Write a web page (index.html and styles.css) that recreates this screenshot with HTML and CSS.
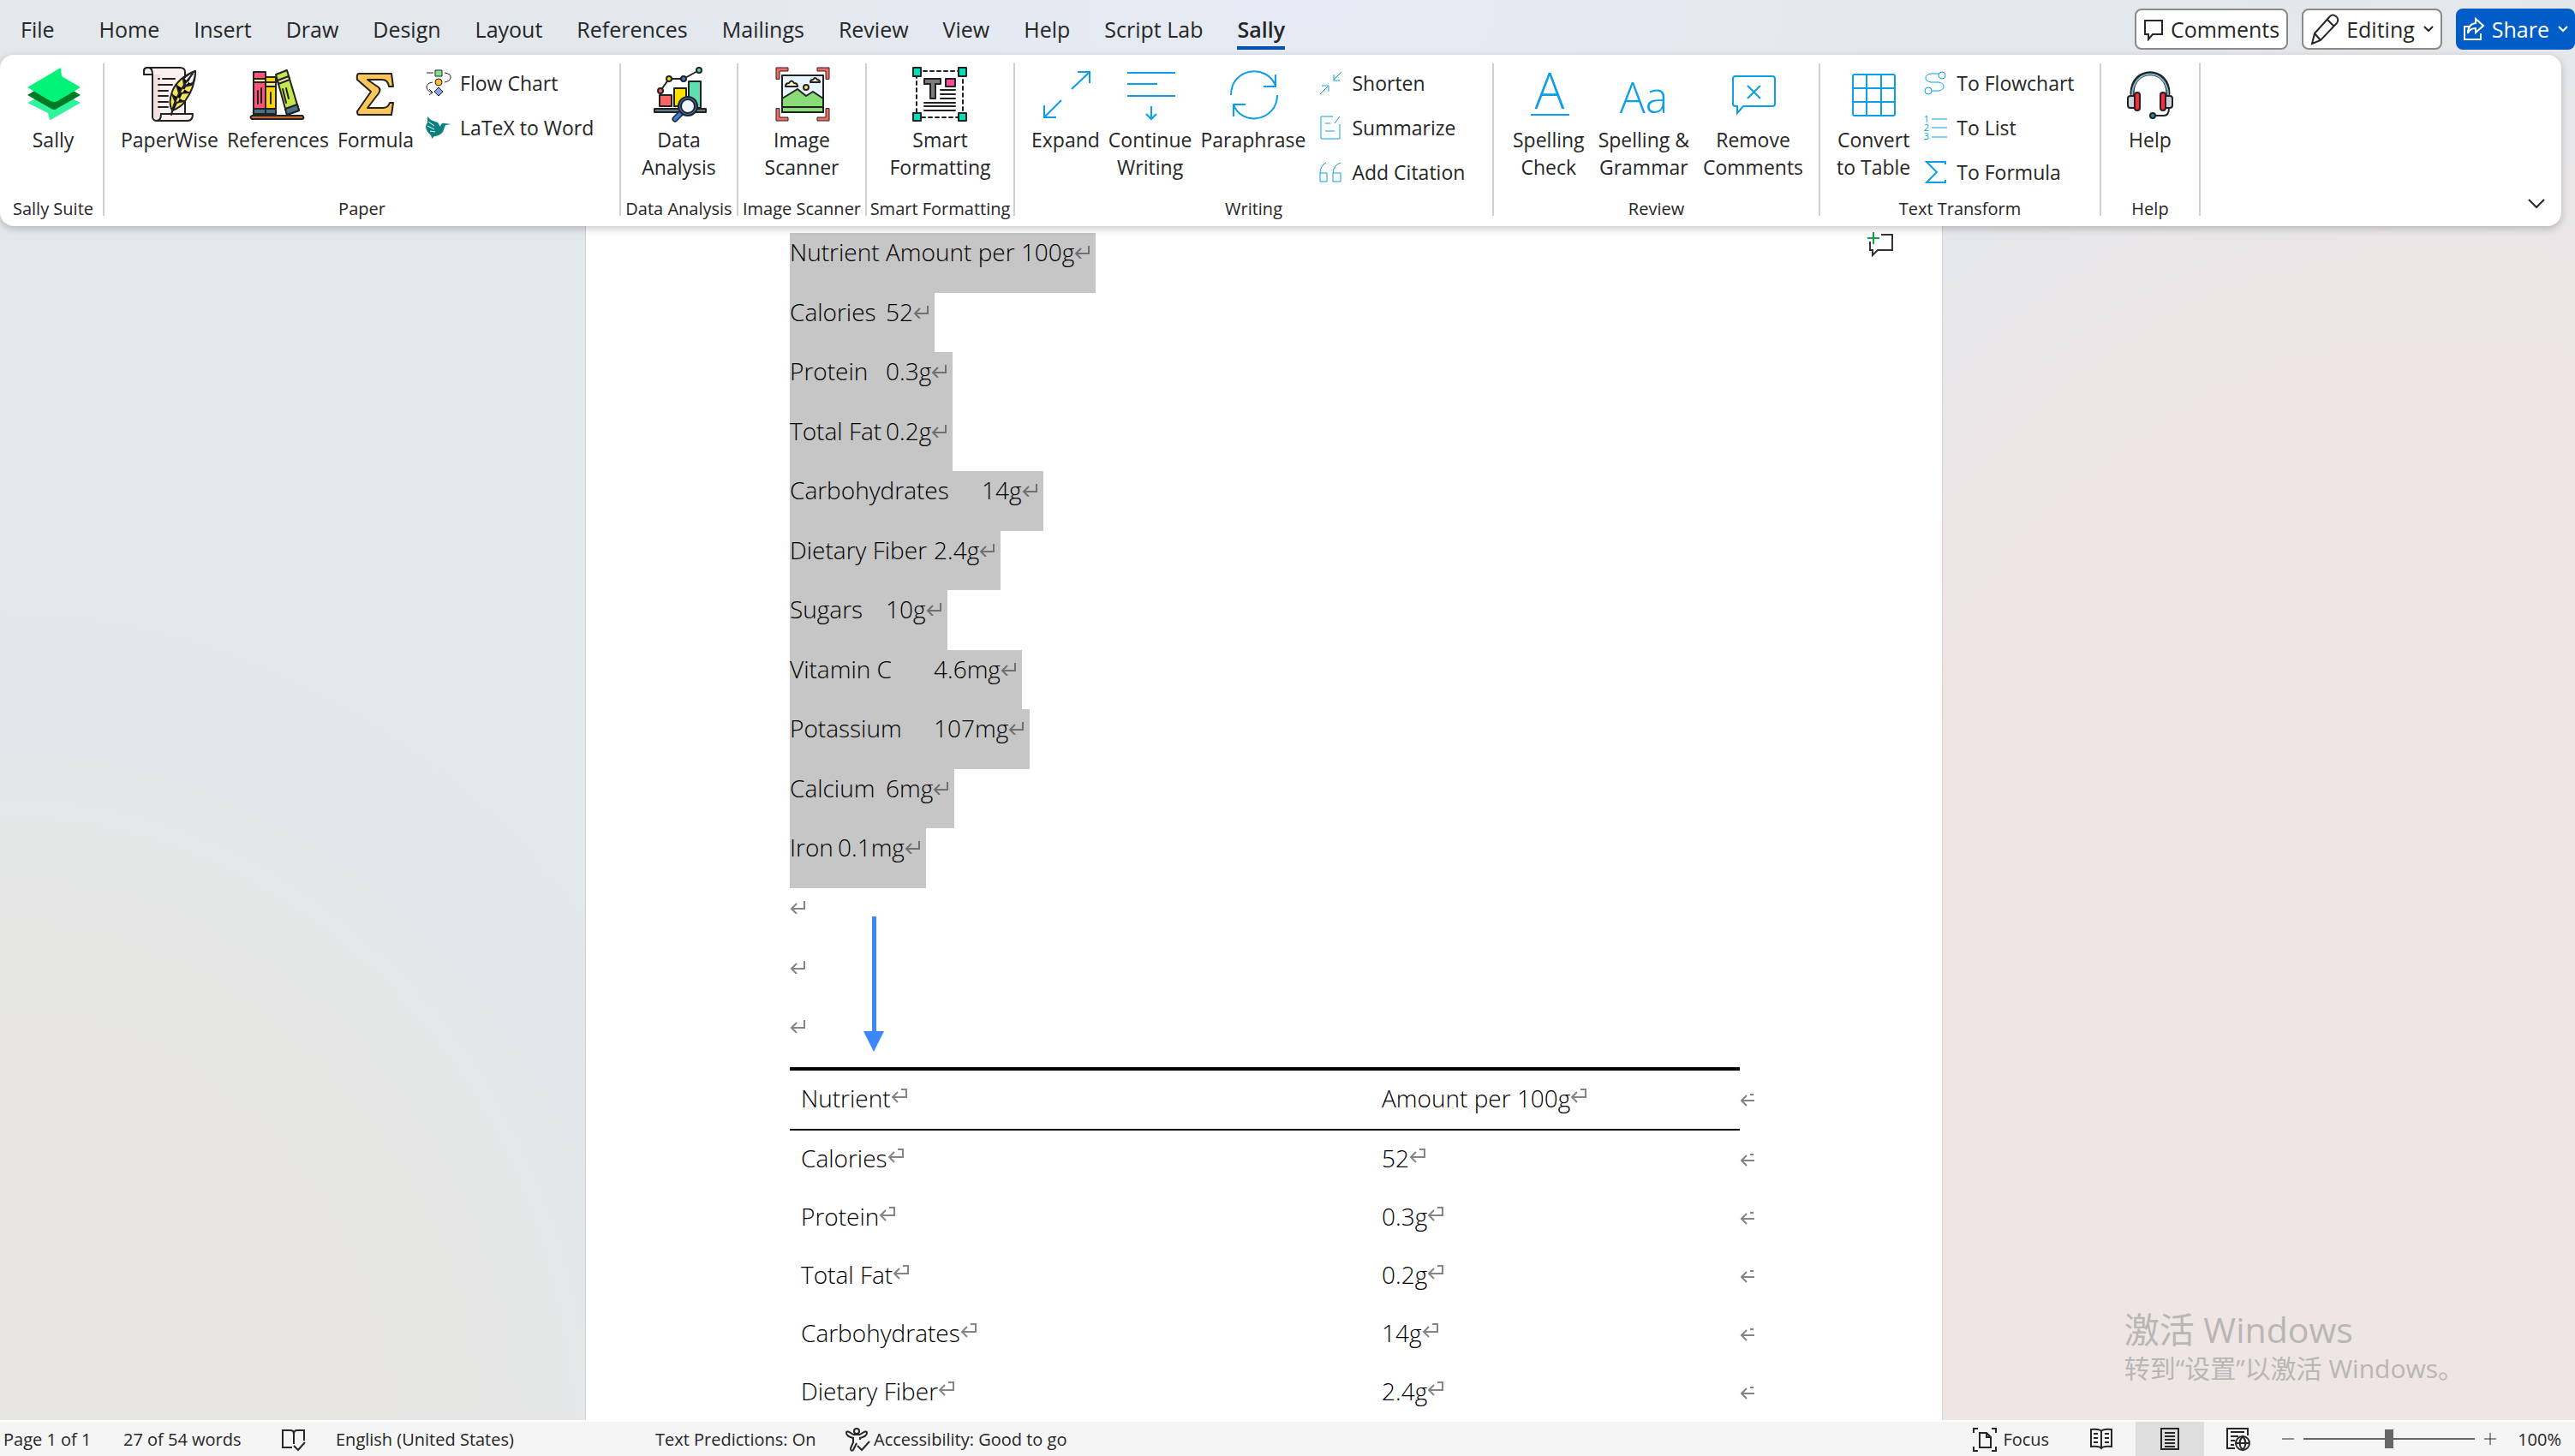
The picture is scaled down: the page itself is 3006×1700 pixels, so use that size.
FILE: index.html
```html
<!DOCTYPE html>
<html lang="en">
<head>
    <meta charset="UTF-8">
    <title>Nutrition - Word</title>
    <link rel="stylesheet" href="styles.css">
</head>
<body>
    <!-- Shared marks -->
    <svg class="defs" aria-hidden="true">
        <symbol id="ret" viewBox="0 0 18 16"><path d="M17 1v9H2M8 4L2 10l6 6"/></symbol>
        <symbol id="cell" viewBox="0 0 20 20"><path d="M12 2h6v9H2M8 5l-6 6 6 6"/></symbol>
        <symbol id="rowend" viewBox="0 0 18 18"><path d="M12 3h4M2 10h15M8 4l-6 6 6 6"/></symbol>
        <symbol id="down" viewBox="0 0 12 12"><path d="M1 3l5 5 5-5"/></symbol>
    </svg>

    <header class="topbar">
        <nav class="tabs">
            <a href="#" class="tab file">File</a>
            <a href="#" class="tab">Home</a>
            <a href="#" class="tab">Insert</a>
            <a href="#" class="tab">Draw</a>
            <a href="#" class="tab">Design</a>
            <a href="#" class="tab">Layout</a>
            <a href="#" class="tab">References</a>
            <a href="#" class="tab">Mailings</a>
            <a href="#" class="tab">Review</a>
            <a href="#" class="tab">View</a>
            <a href="#" class="tab">Help</a>
            <a href="#" class="tab">Script Lab</a>
            <a href="#" class="tab active">Sally</a>
        </nav>
        <div class="actions">
            <button class="action">
                <svg class="line" width="24" height="28" viewBox="0 0 24 28"><path d="M2 4h20v16H11l-5 6v-6H2z"/></svg>
                Comments
            </button>
            <button class="action">
                <svg class="line" width="34" height="38" viewBox="0 0 34 38"><path d="M2 36l3-12L23 4q3-3 7 0t1 8L12 32zM5 24l7 8M20 8l8 8"/></svg>
                Editing
                <svg class="line chev" width="12" height="12"><use href="#down"/></svg>
            </button>
            <button class="action share">
                <svg class="line" width="26" height="28" viewBox="0 0 26 28"><path d="M7 11H2v15h19v-7M15 2l9 8-9 8v-5q-7 0-9 6 0-11 9-12z"/></svg>
                Share
                <svg class="line chev" width="12" height="12"><use href="#down"/></svg>
            </button>
        </div>
    </header>

    <section class="ribbon">
        <div class="group g-sally">
            <div class="tools">
                <button class="tool">
                    <svg class="icon" viewBox="0 0 64 64">
                        <path fill="#2ef59c" d="M2 42l10-5h42l10 5-35 20h-1l-2-8z"/>
                        <path fill="#007a26" d="M2 33l10-6h42l10 6-28 16q-3 2-6 0z"/>
                        <path fill="#00f377" d="M2 24L41 1l1 10 22 13-27 16q-4 2-8 0z"/>
                    </svg>
                    <span>Sally</span>
                </button>
            </div>
            <div class="group-name">Sally Suite</div>
        </div>

        <div class="group g-paper">
            <div class="tools">
                <button class="tool">
                    <svg class="icon ink" viewBox="0 0 64 64">
                        <path fill="#fbf1f0" d="M12 9H2V5q0-4 5-4h37q6 0 6 5v49H22v5q-1 3-5 3t-5-4z"/>
                        <path fill="#f2e0df" stroke="none" d="M13 9h8v51h-8z"/>
                        <path fill="#fbf1f0" d="M7 1q5 0 5 8H2V5q0-4 5-4zM22 55h37q0 8-6 8H17q5 0 5-8z"/>
                        <path d="M19 14h1M24 14h14M19 21h16M19 28h11M19 34h11M19 41h11M19 47h11"/>
                        <path fill="#f5e35c" d="M35 51q-5-9 0-22Q41 13 62 5q0 19-12 35-4 7-15 11z"/>
                        <path fill="#fff" d="M48 14q6-6 14-9 0 8-3 14l-9 3z"/>
                        <path d="M34 56Q38 33 59 8M48 13l1 10 9-2M40 21l3 10 12-1M35 32l4 10 10-2"/>
                    </svg>
                    <span>PaperWise</span>
                </button>
                <button class="tool">
                    <svg class="icon ink" viewBox="0 0 64 64">
                        <path fill="#ff5577" d="M4 6h14v49H4z"/><path fill="#ffd400" d="M18 12h12v43H18z"/>
                        <path fill="#f5ea9c" d="M4 14h14v4H4zM18 18h12v5H18z"/>
                        <path fill="#4a7188" d="M4 49h14v6H4zM18 49h12v6H18z"/>
                        <path fill="#c5e64c" d="M30 9l13-5 14 47-14 5z"/>
                        <path fill="#f0f0a5" d="M32 16l13-5 1 4-13 5z"/><path fill="#4a7188" d="M41 49l14-5 2 7-14 5z"/>
                        <path d="M9 28v15M13 25v17M24 30v13M38 26l4 16M42 25l3 12"/>
                        <path fill="#c96532" d="M2 57h59q3 3 0 4H2q-3-2 0-4z"/>
                    </svg>
                    <span>References</span>
                </button>
                <button class="tool">
                    <svg class="icon ink" viewBox="0 0 64 64">
                        <path fill="#fcc659" d="M12 8h38l2 15h-5q-1-8-8-8H22l13 9q3 3 0 7L22 48h18q6 0 8-6h4l-2 14H12q-2 0-2-4l16-23L10 15q-1-7 2-7z"/>
                    </svg>
                    <span>Formula</span>
                </button>
                <div class="small-tools">
                    <button class="small">
                        <svg class="mini" viewBox="0 0 32 32" fill="none" stroke="#222">
                            <path d="M1 4h8M22 4q8 1 7 6-1 4-7 5M8 15q-7 1-7 6 1 5 7 6M4 23l4 4-4 3"/>
                            <path fill="#7fe09a" d="M11 1h8v7h-8z"/><circle cx="15" cy="15" r="4" fill="#fbc02d"/><path fill="#8f9bf0" d="M15 21l5 5-5 5-5-5z"/>
                        </svg>
                        Flow Chart
                    </button>
                    <button class="small">
                        <svg class="mini" viewBox="0 0 32 32">
                            <path fill="#0a8080" d="M2 3l4 4 8 3 3 5q1-5 5-4l8 1-7 1-3 8q-4 5-10 5l-3 3q0-4-3-6-4-4-4-9l2-4z"/>
                            <path stroke="#fff" d="M3 9l7 5M2 14l8 4M5 20l6 1" fill="none"/>
                        </svg>
                        LaTeX to Word
                    </button>
                </div>
            </div>
            <div class="group-name">Paper</div>
        </div>

        <div class="group g-data">
            <div class="tools">
                <button class="tool">
                    <svg class="icon ink" viewBox="0 0 64 64">
                        <path fill="#ff6464" d="M9 33h14v13H9z"/><path fill="#ffe100" d="M26 25h14v21H26z"/><path fill="#5ce0b0" d="M43 17h14v31H43z"/>
                        <path fill="#5f7d8c" d="M3 49h60v4H3z"/>
                        <path fill="none" d="M10 28l10-14h17L55 4"/>
                        <circle cx="10" cy="28" r="3" fill="#ff6464"/><circle cx="20" cy="14" r="3" fill="#ffe100"/><circle cx="37" cy="14" r="3" fill="#3c7be0"/><circle cx="55" cy="4" r="3" fill="#5ce0b0"/>
                        <path stroke="#222" stroke-width="7" d="M34 54l-7 7"/><path stroke="#3c7be0" stroke-width="4" d="M33 55l-6 6"/>
                        <circle cx="42" cy="46" r="11" fill="#3c7be0"/><circle cx="42" cy="46" r="8" fill="#eef5fb"/>
                    </svg>
                    <span>Data<br>Analysis</span>
                </button>
            </div>
            <div class="group-name">Data Analysis</div>
        </div>

        <div class="group g-image">
            <div class="tools">
                <button class="tool">
                    <svg class="icon ink" viewBox="0 0 64 64">
                        <path fill="#e9f5fe" d="M9 10h48v43H9z"/>
                        <path fill="#89dc78" d="M9 37l18-11 10 8 8-5 12 8v16H9zM9 47h48"/>
                        <circle cx="37" cy="24" r="3" fill="#ffe766"/>
                        <path fill="#fff3c8" d="M13 23q0-4 4-4 3-5 6 0 4 0 4 4zM42 18q0-3 3-3 3-4 5 0 3 0 3 3z"/>
                        <path fill="#f26a60" stroke-width="1" d="M2 14V1h14v4H6v9zM64 14V1H50v4h10v9zM2 49v14h14v-4H6V49zM64 49v14H50v-4h10V49z"/>
                    </svg>
                    <span>Image<br>Scanner</span>
                </button>
            </div>
            <div class="group-name">Image Scanner</div>
        </div>

        <div class="group g-smart">
            <div class="tools">
                <button class="tool">
                    <svg class="icon ink" viewBox="0 0 64 64">
                        <path fill="none" stroke-dasharray="4 4" d="M5 5h54v54H5z"/>
                        <path fill="#00dfb5" d="M1 1h9v10H1zM54 1h9v10h-9zM1 54h9v9H1zM54 54h9v9h-9z"/>
                        <path fill="#7c7c7c" d="M14 14h19v6h-6v17h-6V20h-7z"/>
                        <path fill="#ff4a9a" d="M39 14h11v9H39z"/>
                        <path d="M33 27h17M33 32h17M33 37h17M14 42h36M14 46h36M14 51h36"/>
                    </svg>
                    <span>Smart<br>Formatting</span>
                </button>
            </div>
            <div class="group-name">Smart Formatting</div>
        </div>

        <div class="group g-writing">
            <div class="tools">
                <button class="tool">
                    <svg class="icon cyan" viewBox="0 0 64 64"><path d="M39 26L60 6M46 6h14v13M27 39L7 59M7 45v14h14"/></svg>
                    <span>Expand</span>
                </button>
                <button class="tool">
                    <svg class="icon cyan" viewBox="0 0 64 64"><path d="M5 7h56M5 20h35M5 34h56M33 46v15M27 55l6 6 6-6"/></svg>
                    <span>Continue<br>Writing</span>
                </button>
                <button class="tool">
                    <svg class="icon cyan" viewBox="0 0 64 64"><path d="M6 33C6 1 48-4 58 22M58 9v14H44M60 33c0 31-42 37-51 11M9 58V44h14"/></svg>
                    <span>Paraphrase</span>
                </button>
                <div class="small-tools">
                    <button class="small">
                        <svg class="mini cyan" viewBox="0 0 32 32"><path d="M28 3L19 12M19 6v7h7M3 29l9-9M5 19h8v7"/></svg>
                        Shorten
                    </button>
                    <button class="small">
                        <svg class="mini cyan" viewBox="0 0 32 32"><path d="M18 3H4v26h22V12M9 11h6M9 20h11M20 11l6-8"/></svg>
                        Summarize
                    </button>
                    <button class="small">
                        <svg class="mini cyan" viewBox="0 0 32 32"><path d="M10 5Q3 8 3 18v9h8V17H3M27 5q-9 3-9 13v9h9V17h-9"/></svg>
                        Add Citation
                    </button>
                </div>
            </div>
            <div class="group-name">Writing</div>
        </div>

        <div class="group g-review">
            <div class="tools">
                <button class="tool">
                    <svg class="icon cyan" viewBox="0 0 64 64"><text x="33" y="49" class="big-letter">A</text><path d="M11 56h45"/></svg>
                    <span>Spelling<br>Check</span>
                </button>
                <button class="tool">
                    <svg class="icon cyan" viewBox="0 0 64 64"><text x="32" y="54" class="letters">Aa</text></svg>
                    <span>Spelling &amp;<br>Grammar</span>
                </button>
                <button class="tool">
                    <svg class="icon cyan" viewBox="0 0 64 64"><path d="M11 11h43q3 0 3 3v29q0 3-3 3H20l-7 8v-8h-2q-3 0-3-3V14q0-3 3-3zM25 22l15 15M40 22L25 37"/></svg>
                    <span>Remove<br>Comments</span>
                </button>
            </div>
            <div class="group-name">Review</div>
        </div>

        <div class="group g-transform">
            <div class="tools">
                <button class="tool">
                    <svg class="icon cyan" viewBox="0 0 64 64"><path d="M10 9h45q2 0 2 2v44q0 2-2 2H10q-2 0-2-2V11q0-2 2-2zM8 25h49M8 41h49M24 9v48M41 9v48"/></svg>
                    <span>Convert<br>to Table</span>
                </button>
                <div class="small-tools">
                    <button class="small">
                        <svg class="mini cyan" viewBox="0 0 32 32"><circle cx="23" cy="7" r="4"/><circle cx="7" cy="25" r="4"/><path d="M19 5h-9q-6 1-6 5t6 5h9q6 1 6 5t-6 5h-8"/></svg>
                        To Flowchart
                    </button>
                    <button class="small">
                        <svg class="mini cyan" viewBox="0 0 32 32"><text x="5" y="10" class="digit">1</text><text x="5" y="20" class="digit">2</text><text x="5" y="30" class="digit">3</text><path d="M11 6h18M11 16h18M11 27h18"/></svg>
                        To List
                    </button>
                    <button class="small">
                        <svg class="mini cyan thick" viewBox="0 0 32 32"><path d="M27 7V4H5l12 12L5 28h22v-3"/></svg>
                        To Formula
                    </button>
                </div>
            </div>
            <div class="group-name">Text Transform</div>
        </div>

        <div class="group g-help">
            <div class="tools">
                <button class="tool">
                    <svg class="icon ink" viewBox="0 0 64 64">
                        <path fill="none" stroke-width="5" d="M11 31C11 0 53 0 53 31"/>
                        <path fill="none" stroke="#79b9cb" stroke-width="2" d="M11 34C11 0 53 0 53 34"/>
                        <path fill="#c9d5dd" d="M14 34H9q-3 0-3 3v8q0 3 3 3h5zM50 34h5q3 0 3 3v8q0 3-3 3h-5z"/>
                        <rect x="14" y="30" width="6" height="21" rx="3" fill="#ff2b3c"/><rect x="44" y="30" width="6" height="21" rx="3" fill="#ff2b3c"/>
                        <path fill="none" d="M54 48q0 9-6 9H38"/><circle cx="35" cy="57" r="3" fill="#1b8fc4"/>
                    </svg>
                    <span>Help</span>
                </button>
            </div>
            <div class="group-name">Help</div>
        </div>

        <button class="collapse" aria-label="Collapse ribbon">
            <svg class="line" width="22" height="22" viewBox="0 0 22 22"><path d="M2 6l9 9 9-9"/></svg>
        </button>
    </section>

    <main class="canvas">
        <article class="page">
            <div class="selected">
                <p><span>Nutrient&#9;Amount per 100g<svg class="mark"><use href="#ret"/></svg></span></p>
                <p><span>Calories&#9;52<svg class="mark"><use href="#ret"/></svg></span></p>
                <p><span>Protein&#9;0.3g<svg class="mark"><use href="#ret"/></svg></span></p>
                <p><span>Total Fat&#9;0.2g<svg class="mark"><use href="#ret"/></svg></span></p>
                <p><span>Carbohydrates&#9;14g<svg class="mark"><use href="#ret"/></svg></span></p>
                <p><span>Dietary Fiber&#9;2.4g<svg class="mark"><use href="#ret"/></svg></span></p>
                <p><span>Sugars&#9;10g<svg class="mark"><use href="#ret"/></svg></span></p>
                <p><span>Vitamin C&#9;4.6mg<svg class="mark"><use href="#ret"/></svg></span></p>
                <p><span>Potassium&#9;107mg<svg class="mark"><use href="#ret"/></svg></span></p>
                <p><span>Calcium&#9;6mg<svg class="mark"><use href="#ret"/></svg></span></p>
                <p><span>Iron&#9;0.1mg<svg class="mark"><use href="#ret"/></svg></span></p>
            </div>
            <div class="empty">
                <p><svg class="mark"><use href="#ret"/></svg></p>
                <p><svg class="mark"><use href="#ret"/></svg></p>
                <p><svg class="mark"><use href="#ret"/></svg></p>
                <svg class="arrow" viewBox="0 0 24 158"><path d="M10 0h5v134h9l-12 24L0 134h10z"/></svg>
            </div>
            <table class="result">
                <thead>
                    <tr><th>Nutrient<svg class="mark cell"><use href="#cell"/></svg></th><th>Amount per 100g<svg class="mark cell"><use href="#cell"/></svg></th><td class="end"><svg class="mark"><use href="#rowend"/></svg></td></tr>
                </thead>
                <tbody>
                    <tr><td>Calories<svg class="mark cell"><use href="#cell"/></svg></td><td>52<svg class="mark cell"><use href="#cell"/></svg></td><td class="end"><svg class="mark"><use href="#rowend"/></svg></td></tr>
                    <tr><td>Protein<svg class="mark cell"><use href="#cell"/></svg></td><td>0.3g<svg class="mark cell"><use href="#cell"/></svg></td><td class="end"><svg class="mark"><use href="#rowend"/></svg></td></tr>
                    <tr><td>Total Fat<svg class="mark cell"><use href="#cell"/></svg></td><td>0.2g<svg class="mark cell"><use href="#cell"/></svg></td><td class="end"><svg class="mark"><use href="#rowend"/></svg></td></tr>
                    <tr><td>Carbohydrates<svg class="mark cell"><use href="#cell"/></svg></td><td>14g<svg class="mark cell"><use href="#cell"/></svg></td><td class="end"><svg class="mark"><use href="#rowend"/></svg></td></tr>
                    <tr><td>Dietary Fiber<svg class="mark cell"><use href="#cell"/></svg></td><td>2.4g<svg class="mark cell"><use href="#cell"/></svg></td><td class="end"><svg class="mark"><use href="#rowend"/></svg></td></tr>
                </tbody>
            </table>
            <button class="add-comment" aria-label="Add comment">
                <svg width="32" height="30" viewBox="0 0 32 30"><path fill="none" stroke="#333" stroke-width="2" d="M17 4h13v18H13l-6 6v-6H4V12"/><path stroke="#10a54a" stroke-width="2" d="M8 1v14M1 8h14"/></svg>
            </button>
        </article>
        <div class="watermark" lang="zh-CN">
            <div class="watermark-title">激活 Windows</div>
            <div class="watermark-text">转到“设置”以激活 Windows。</div>
        </div>
    </main>

    <footer class="status">
        <span class="s-page">Page 1 of 1</span>
        <span class="s-words">27 of 54 words</span>
        <button class="s-proof" aria-label="Proofing">
            <svg class="line" width="30" height="28" viewBox="0 0 30 28"><path d="M13 23H2V3h9q4 0 4 4 0-4 4-4h8v12M15 7v12M15 21l5 5 8-9"/></svg>
        </button>
        <span class="s-lang">English (United States)</span>
        <span class="s-pred">Text Predictions: On</span>
        <button class="s-access">
            <svg class="line" width="32" height="30" viewBox="0 0 32 30"><circle cx="14" cy="5" r="3"/><path d="M10 9Q2 3 2 7t8 6v5l-3 7q0 4 3 2l4-8M18 9q8-6 8-2t-8 6v2M10 9h8M15 22l5 5 9-10"/></svg>
            Accessibility: Good to go
        </button>
        <div class="views">
            <button class="s-focus">
                <svg class="line" width="30" height="30" viewBox="0 0 30 30"><path d="M2 7V2h5M23 2h5v5M28 23v5h-5M7 28H2v-5M9 7h8l5 5v12H9zM17 7v5h5"/></svg>
                Focus
            </button>
            <button class="view" aria-label="Read mode">
                <svg class="line" width="28" height="28" viewBox="0 0 28 28"><path d="M14 5q-2-3-12-2v20q10-1 12 2 2-3 12-2V3q-10-1-12 2v20M5 8h5M5 13h5M5 18h5M18 8h5M18 13h5M18 18h5"/></svg>
            </button>
            <button class="view on" aria-label="Print layout">
                <svg class="line" width="24" height="28" viewBox="0 0 24 28"><path d="M2 2h20v24H2zM6 7h12M6 11h12M6 15h12M6 19h12M6 23h12"/></svg>
            </button>
            <button class="view" aria-label="Web layout">
                <svg class="line" width="30" height="28" viewBox="0 0 30 28"><path d="M11 25H2V2h24v8M6 6h16M6 11h9M6 16h5M6 21h4"/><circle cx="20" cy="19" r="8"/><path d="M12 19h16M20 11q-7 8 0 16M20 11q7 8 0 16"/></svg>
            </button>
            <button class="zoom-btn" aria-label="Zoom out"><svg class="line thin" width="16" height="16" viewBox="0 0 16 16"><path d="M1 8h14"/></svg></button>
            <input class="zoom" type="range" min="0" max="100" value="50" aria-label="Zoom">
            <button class="zoom-btn" aria-label="Zoom in"><svg class="line thin" width="16" height="16" viewBox="0 0 16 16"><path d="M1 8h14M8 1v14"/></svg></button>
            <span class="percent">100%</span>
        </div>
    </footer>
</body>
</html>
```
FILE: styles.css
```css
* {
    box-sizing: border-box;
}

body {
    margin: 0;
    height: 100vh;
    display: flex;
    flex-direction: column;
    overflow: hidden;
    font-family: "Open Sans", "Noto Sans CJK SC", sans-serif;
    font-size: 23px;
    color: #262626;
    background:
        radial-gradient(ellipse 900px 500px at 50% 0, #e6eaf4, transparent),
        radial-gradient(ellipse 1100px 1400px at 95% 80%, #efe5e3 65%, transparent),
        radial-gradient(ellipse 900px 1000px at 0 100%, #e8e6e1 40%, transparent),
        #e3e8ed;
}

button {
    border: none;
    background: none;
    padding: 0;
    font: inherit;
    color: inherit;
    cursor: pointer;
}

.defs {
    display: none;
}

.line {
    flex: none;
    fill: none;
    stroke: currentColor;
    stroke-width: 2;
}

.thin {
    stroke-width: 1;
}

/* Tabs */
.topbar {
    display: flex;
    justify-content: space-between;
    align-items: center;
    height: 64px;
    flex: none;
    padding-left: 24px;
    font-size: 25px;
}

.tabs {
    display: flex;
    gap: 40px;
    margin-top: 8px;
}

.tab {
    padding: 3px 0;
    line-height: 34px;
    color: #262626;
    text-decoration: none;
    border-bottom: 4px solid transparent;
}

.file {
    margin-right: 12px;
}

.active {
    font-weight: 600;
    border-color: #0050b4;
}

.actions {
    display: flex;
    gap: 16px;
    padding-top: 4px;
}

.action {
    display: flex;
    align-items: center;
    gap: 8px;
    height: 48px;
    padding: 0 8px;
    background: white;
    border: 2px solid #8a8a8a;
    border-radius: 8px;
}

.chev {
    margin-left: 2px;
}

.share {
    background: #005dc8;
    border-color: #005dc8;
    color: white;
    padding: 0 6px;
}

/* Ribbon */
.ribbon {
    display: flex;
    height: 200px;
    flex: none;
    margin-right: 16px;
    padding: 10px 0 12px;
    background: white;
    border-radius: 16px;
    box-shadow: 0 3px 10px rgba(0, 0, 0, 0.22);
    position: relative;
    z-index: 1;
}

.group {
    display: flex;
    flex-direction: column;
    justify-content: space-between;
    flex: none;
    border-right: 2px solid #d0d0d0;
}

.g-sally { width: 122px; padding-left: 4px; }
.g-paper { width: 603px; }
.g-data { width: 137px; }
.g-image { width: 150px; }
.g-smart { width: 173px; }
.g-writing { width: 559px; }
.g-review { width: 381px; }
.g-transform { width: 328px; }
.g-help { width: 116px; }

.tools {
    display: flex;
    padding-left: 14px;
}

.g-sally .tools,
.g-data .tools,
.g-image .tools,
.g-smart .tools,
.g-help .tools {
    justify-content: center;
    padding: 0;
}

.tool {
    display: flex;
    flex-direction: column;
    align-items: center;
    gap: 5px;
    padding: 4px 5px 0;
    line-height: 32px;
}

.g-review .tool {
    padding: 4px 8px 0;
}

.icon {
    width: 64px;
    height: 64px;
    overflow: visible;
}

.ink {
    stroke: #222;
    stroke-width: 2;
    stroke-linejoin: round;
    stroke-linecap: round;
}

.cyan {
    fill: none;
    stroke: #0a9fe6;
    stroke-width: 2;
}

.cyan text {
    fill: #0a9fe6;
    stroke: none;
    font-weight: 300;
    text-anchor: middle;
}

.big-letter {
    font-size: 58px;
}

.letters {
    font-size: 50px;
}

.cyan .digit {
    font-size: 11px;
    font-weight: 400;
}

.mini {
    width: 32px;
    height: 32px;
    flex: none;
    overflow: visible;
}

.mini.cyan {
    stroke-width: 1;
}

.mini.thick {
    stroke-width: 2;
}

.small-tools {
    display: flex;
    flex-direction: column;
    gap: 6px;
    margin-left: 9px;
}

.small {
    display: flex;
    align-items: center;
    gap: 8px;
    height: 46px;
    white-space: nowrap;
}

.group-name {
    font-size: 20px;
    line-height: 16px;
    text-align: center;
    white-space: nowrap;
}

.collapse {
    align-self: flex-end;
    margin: 0 18px 6px auto;
    height: 22px;
}

/* Document */
.canvas {
    flex: 1;
    min-height: 0;
    overflow: hidden;
    padding-right: 55px;
    position: relative;
}

.page {
    width: 1585px;
    height: 100%;
    margin: 0 auto;
    padding: 8px 236px 0 238px;
    background: white;
    border: 1px solid #cfcfcf;
    border-width: 0 1px;
    font-size: 28px;
    font-weight: 300;
    color: black;
    position: relative;
}

.page p {
    margin: 0;
    height: 70px;
    line-height: 44px;
    white-space: pre;
    tab-size: 56px;
}

.page p:nth-child(even) {
    height: 69px;
}

.selected p {
    width: fit-content;
    padding-right: 7px;
    background: #c6c6c6;
}

.mark {
    width: 18px;
    height: 16px;
    margin-bottom: 3px;
    fill: none;
    stroke: #858585;
    stroke-width: 2;
}

.selected .mark {
    stroke: #707070;
}

.mark.cell {
    width: 20px;
    height: 20px;
}

.empty {
    position: relative;
}

.arrow {
    position: absolute;
    left: 86px;
    top: 33px;
    width: 24px;
    height: 158px;
    fill: #3a87ff;
}

.result {
    width: 100%;
    table-layout: fixed;
    border-collapse: collapse;
    border-top: 4px solid black;
}

.result th,
.result td {
    height: 68px;
    padding: 0 0 4px 13px;
    line-height: 64px;
    font-weight: 300;
    text-align: left;
}

.result th:first-child {
    width: 678px;
}

.result thead tr {
    border-bottom: 2px solid black;
}

.result .end {
    width: 0;
    padding-left: 2px;
    overflow: visible;
}

.end .mark {
    height: 18px;
    margin-bottom: 0;
}

.add-comment {
    position: absolute;
    top: 6px;
    right: 56px;
}

.watermark {
    position: absolute;
    right: 130px;
    bottom: 40px;
    color: #b8b6b6;
    white-space: nowrap;
}

.watermark-title {
    font-size: 41px;
    line-height: 52px;
}

.watermark-text {
    font-size: 30px;
    line-height: 40px;
}

/* Status bar */
.status {
    display: flex;
    align-items: center;
    flex: none;
    height: 42px;
    padding-left: 4px;
    background: #f5f5f5;
    border-top: 2px solid white;
    font-size: 20px;
    line-height: 38px;
    white-space: nowrap;
}

.status > span,
.status > button,
.s-focus,
.percent {
    padding-top: 2px;
}

.s-page { width: 140px; }
.s-words { width: 184px; }
.s-proof { width: 64px; }
.s-lang { width: 373px; }
.s-pred { width: 221px; }

.s-proof,
.s-access,
.s-focus,
.view,
.zoom-btn {
    display: flex;
    align-items: center;
}

.views {
    display: flex;
    align-items: center;
    align-self: stretch;
    margin-left: auto;
    padding-right: 16px;
}

.s-access {
    gap: 2px;
}

.s-focus {
    gap: 6px;
    margin-right: 21px;
}

.view {
    justify-content: center;
    align-self: stretch;
    width: 80px;
}

.on {
    background: #dedede;
}

.zoom-btn {
    margin: 0 10px;
}

.zoom {
    appearance: none;
    width: 200px;
    height: 22px;
    margin: 0;
    background: linear-gradient(#666, #666) center / 100% 2px no-repeat;
}

.zoom::-webkit-slider-thumb {
    appearance: none;
    width: 10px;
    height: 22px;
    background: #666;
}

.percent {
    margin-left: 14px;
}
```
